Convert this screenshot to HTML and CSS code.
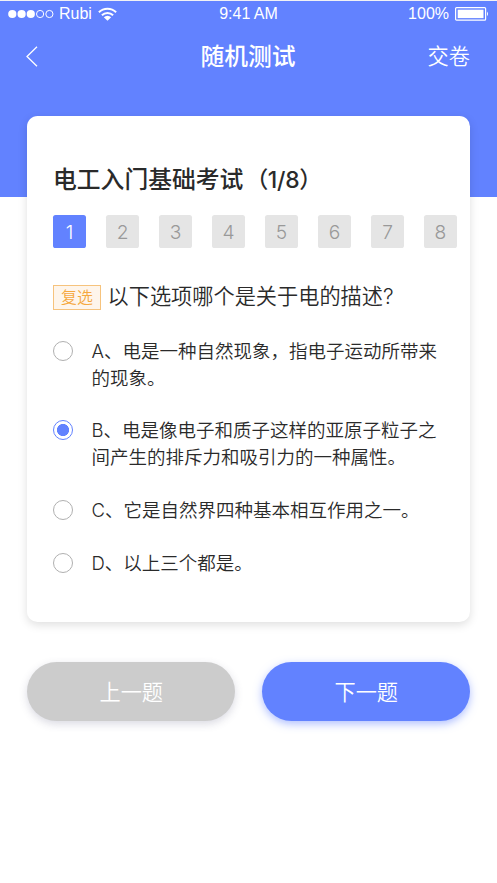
FILE: index.html
```html
<!DOCTYPE html>
<html lang="zh-CN">
<head>
<meta charset="utf-8">
<meta name="viewport" content="width=device-width, initial-scale=1">
<title>随机测试</title>
<link rel="stylesheet" href="styles.css">
</head>
<body>
<div class="screen">
  <header class="header">
    <div class="status">
      <div class="carrier">
        <svg class="signal" width="47" height="10" viewBox="0 0 47 10"><g fill="#fff"><circle cx="4.3" cy="5" r="4.1"/><circle cx="13.6" cy="5" r="4.1"/><circle cx="22.8" cy="5" r="4.1"/></g><g fill="none" stroke="#fff" stroke-width="1"><circle cx="32.1" cy="5" r="3.6"/><circle cx="41.4" cy="5" r="3.6"/></g></svg>
        <span>Rubi</span>
        <svg class="wifi" width="19" height="14" viewBox="0 0 19 14"><g fill="none" stroke="#fff" stroke-width="2"><path d="M.9 5.2a12.3 12.3 0 0 1 17.2 0"/><path d="M3.9 8.3a8 8 0 0 1 11.2 0"/></g><path fill="#fff" d="M5.8 10.2a5.3 5.3 0 0 1 7.4 0L9.5 13.8z"/></svg>
      </div>
      <span class="time">9:41 AM</span>
      <div class="power">
        <span>100%</span>
        <svg width="34" height="14" viewBox="0 0 34 14"><rect x=".6" y=".6" width="30" height="12.6" rx="1" fill="none" stroke="#fff" stroke-width="1.2"/><rect x="2.7" y="2.7" width="25.8" height="8.4" fill="#fff"/><path d="M32 4.5q2 2.4 0 4.8z" fill="#fff"/></svg>
      </div>
    </div>
    <nav class="nav">
      <svg class="back" width="12" height="21" viewBox="0 0 12 21"><path d="M11 .8 1 10.5 11 20.2" fill="none" stroke="#fff" stroke-width="1.3"/></svg>
      <h1>随机测试</h1>
      <span class="submit">交卷</span>
    </nav>
  </header>
  <main class="card">
    <h2>电工入门基础考试<span class="count">（1/8）</span></h2>
    <div class="pages">
      <span class="page current">1</span><span class="page">2</span><span class="page">3</span><span class="page">4</span><span class="page">5</span><span class="page">6</span><span class="page">7</span><span class="page">8</span>
    </div>
    <div class="question"><span class="tag">复选</span><span class="ask">以下选项哪个是关于电的描述?</span></div>
    <ul class="options">
      <li><i class="radio"></i><p><span class="key">A</span>、电是一种自然现象，指电子运动所带来<br>的现象。</p></li>
      <li><i class="radio checked"></i><p><span class="key">B</span>、电是像电子和质子这样的亚原子粒子之<br>间产生的排斥力和吸引力的一种属性。</p></li>
      <li><i class="radio"></i><p><span class="key">C</span>、它是自然界四种基本相互作用之一。</p></li>
      <li><i class="radio"></i><p><span class="key">D</span>、以上三个都是。</p></li>
    </ul>
  </main>
  <footer class="actions">
    <div class="btn prev">上一题</div>
    <div class="btn next">下一题</div>
  </footer>
</div>
</body>
</html>
```
FILE: styles.css
```css
* { box-sizing: border-box; margin: 0; padding: 0; }
body {
  background: #fff;
  color: #2a2a2a;
  font-family: Inter, "Noto Sans CJK SC", sans-serif;
}
.screen { height: 883px; border-top: 1px solid #f1f1f4; overflow: hidden; }
.header { height: 196px; background: #6282ff; color: #fff; }
.status {
  display: grid;
  grid-template-columns: 1fr auto 1fr;
  align-items: center;
  height: 25px;
  padding: 0 8px;
  font: 16px/25px "Liberation Sans", sans-serif;
}
.carrier, .power { display: flex; align-items: center; }
.signal { margin-right: 4px; }
.wifi { margin-left: 6px; }
.power { justify-content: flex-end; gap: 6px; }
.nav {
  display: grid;
  grid-template-columns: 1fr auto 1fr;
  align-items: center;
  height: 60px;
  padding: 0 27px 0 26px;
}
.nav h1 { font-size: 23.8px; font-weight: 500; line-height: 36px; padding-top: 2px; }
.submit { justify-self: end; font-size: 21.2px; line-height: 30px; font-weight: 350; }
.card {
  position: relative;
  width: 443.5px;
  height: 506px;
  margin: -81px 0 0 26.5px;
  padding: 46px 0 0 26.5px;
  background: #fff;
  border-radius: 10.6px;
  box-shadow: 0 3px 10px rgba(0, 0, 0, .13);
}
.card h2 { font-size: 23.8px; line-height: 36px; font-weight: 500; white-space: nowrap; }
.count { padding-left: 2px; font-size: 22.8px; letter-spacing: -.3px; }
.pages { display: flex; gap: 19.8px; margin-top: 17px; }
.page {
  flex: none;
  width: 33.2px;
  height: 33px;
  border-radius: 2.6px;
  background: #e5e5e5;
  color: #999;
  font-size: 19.2px;
  line-height: 34px;
  text-align: center;
  font-weight: 300;
}
.current { background: #6282ff; color: #fff; }
.question {
  display: flex;
  align-items: center;
  gap: 6.5px;
  height: 32px;
  margin-top: 33px;
  font-size: 21.2px;
  font-weight: 350;
  white-space: nowrap;
}
.ask { line-height: 32px; padding-bottom: 2px; }
.tag {
  width: 48px;
  height: 25px;
  border: 1px solid #f6c37d;
  background: #fef5eb;
  color: #f5a83e;
  font-size: 15.9px;
  line-height: 23px;
  text-align: center;
}
.options { list-style: none; margin-top: 25px; font-size: 18.5px; line-height: 26.5px; font-weight: 350; }
.options li { display: flex; gap: 18.5px; margin-bottom: 26.4px; }
.options p { white-space: nowrap; }
.key { font-weight: 300; }
.radio { flex: none; width: 20px; height: 20px; margin-top: 3px; border: 1.5px solid #b0b0b0; border-radius: 50%; }
.checked { border-color: #6282ff; background: radial-gradient(circle, #6282ff 5.7px, #fff 6.4px); }
.actions { display: flex; justify-content: space-between; padding: 39.5px 27px 0 26.5px; }
.btn {
  width: 208.5px;
  height: 59.5px;
  padding-left: 1px;
  border-radius: 30px;
  color: #fff;
  font-size: 21.2px;
  font-weight: 350;
  line-height: 60px;
  text-align: center;
}
.prev { background: #ccc; box-shadow: 0 3px 9px rgba(70, 70, 110, .2); }
.next { background: #6282ff; box-shadow: 0 3px 9px rgba(98, 130, 255, .5); }
```
